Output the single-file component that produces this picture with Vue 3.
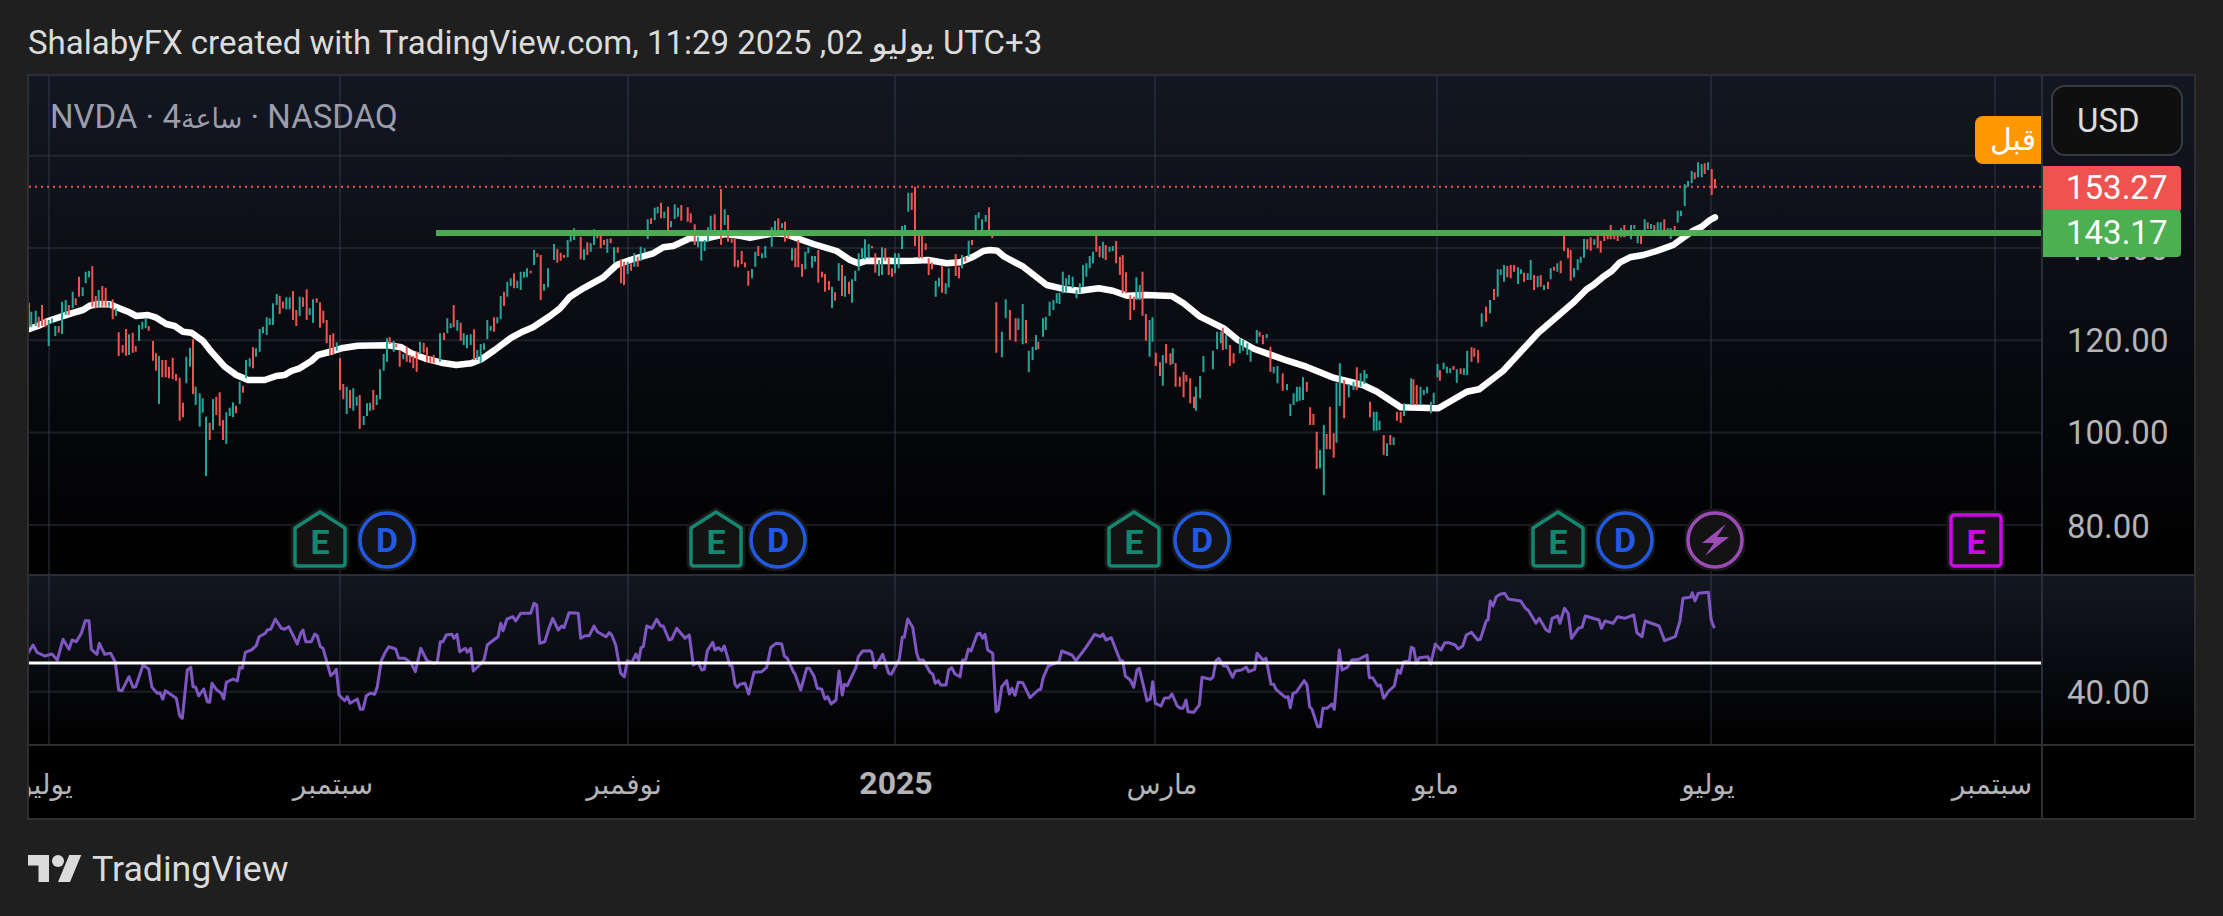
<script setup>
// bars are traced from the picture: "x,top,bottom" in crop coordinates, converted to page coordinates
const bars = (text, ox, oy, sx = 3) =>
  text.trim().split(/\s+/).map((item) => {
    const [x, top, bottom] = item.split(",").map(Number);
    return `M${(ox + x / sx).toFixed(1)} ${(oy + top / 3).toFixed(1)}V${(oy + bottom / 3).toFixed(1)}`;
  }).join("");

const line = (text, ox, oy, sx = 3) =>
  text.trim().split(/\s+/).map((item) => {
    const [x, y] = item.split(",").map(Number);
    return `${(ox + x / sx).toFixed(1)},${(oy + y / 3).toFixed(1)}`;
  }).join(" ");

const tealPath =
  bars(`10,215,262 23,212,258 62,240,318 72,235,250 82,258,288 102,185,282 113,180,225 134,155,205 164,142,168 173,95,130 183,93,112 212,150,200 243,185,200 264,205,228
    303,283,345 333,255,303 343,245,268 353,235,265 393,348,492 475,350,430 486,323,380 503,440,495 515,460,560 524,475,518 534,530,708 555,477,570 595,517,612 605,503,528 615,487,532 635,425,492 654,360,415 665,355,380 684,325,350 695,267,335 705,260,280 716,232,285 725,235,255 735,190,255 746,162,195 775,172,208 785,172,208 815,170,228 845,205,225 855,178,248
    926,307,332 956,440,522 976,445,512 986,470,497 1007,528,555 1017,490,528 1026,488,512 1046,465,495 1056,388,478 1067,342,392 1077,295,365 1097,303,335 1126,342,358 1176,305,342 1236,280,365 1258,235,280 1268,250,265 1288,240,272 1307,280,315 1317,285,325 1328,283,315 1348,330,360 1358,312,368 1368,310,330 1378,240,298 1388,258,272 1408,232,250 1418,168,238 1438,125,170 1448,115,138 1468,122,145 1478,95,150 1488,95,113 1497,85,112 1518,30,75 1548,132,152 1560,85,142`, 28, 240) +
  bars(`222,222,270 263,210,262 272,182,215 282,175,210 292,180,190 312,238,270 332,220,245 342,178,225 382,207,248 402,232,278 443,275,312 463,250,290 482,230,272 494,235,247 503,148,207 524,113,150 533,110,130 553,125,145 573,153,172 584,103,147 594,113,140 654,200,232 664,215,272 674,210,243 684,172,215 692,137,180 734,118,165 816,297,325 826,245,290 846,250,265 856,228,263 875,172,230 885,153,185 906,160,175 936,235,272 976,245,298 985,232,250 996,258,293 1005,258,275 1056,350,415 1076,280,332 1095,318,380 1116,328,398 1126,302,333 1136,250,302 1146,235,265 1155,208,268 1166,222,265 1197,270,318 1206,232,315 1245,250,310 1256,250,295 1266,168,237 1275,165,185 1285,68,125 1367,332,380 1377,323,350 1397,340,372 1406,295,352 1446,255,295 1466,212,260 1487,135,185 1496,127,145 1506,148,185 1517,135,155`, 480, 170) +
  bars(`555,515,592 563,418,475 590,475,510 599,432,553 612,572,637 620,560,600 627,525,570 642,475,530 648,470,510 656,425,468 664,420,450 671,400,430 677,398,432 684,335,400 691,355,395 697,345,375 705,350,385 713,390,415 720,370,400 727,315,380 734,310,350 741,288,325 748,275,310 769,245,295 783,260,275 790,258,273 840,352,420 847,375,420 868,480,590 874,472,545 896,585,677 917,565,612 975,648,715 966,680,752 982,588,637 1002,572,628 1011,515,568 1019,515,550 1030,525,568 1059,535,580 1066,540,572 1075,550,585 1082,572,605 1095,510,550 1116,522,535 1131,620,640 1139,618,670 1159,672,690 1166,732,768 1173,700,735 1180,680,725 1186,680,722 1193,652,720 1237,795,1005 1229,870,925 1264,668,848 1271,610,738 1290,672,712 1300,665,690 1315,640,680 1323,630,672 1328,642,655 1343,755,812 1349,755,812 1355,782,810 1371,850,888 1385,832,855 1407,730,768 1422,655,735 1442,680,735 1449,690,705 1456,680,700 1464,725,760 1470,698,732 1478,612,652 1491,608,628 1498,620,640 1505,625,640 1519,628,668 1534,625,645 1541,572,645`, 740, 160, 2.119) +
  bars(`5,520,560 30,480,520 53,388,470 62,388,405 72,375,425 114,382,432 123,388,402 143,400,420 152,360,420 173,408,442 192,435,450 212,385,418 232,370,395 282,385,412 293,358,390 302,350,368 312,297,353 343,298,315 423,265,292 453,255,298 463,255,267 473,277,310 494,238,275 513,252,267 533,247,282 542,247,270 563,265,285 572,265,297 593,212,248 603,212,228 614,133,198 624,123,140 635,93,130 654,67,112 665,72,112 684,67,90`, 1480, 140);

const redPath =
  bars(`3,188,262 32,230,262 42,195,258 52,238,260 92,258,278 122,195,225 143,175,195 153,110,170 193,78,200 203,168,205 223,138,200 233,143,200 254,178,238
    272,277,348 284,315,338 294,267,347 314,278,338 323,318,335 362,258,272 375,303,362 384,340,392 403,360,412 413,360,412 423,380,415 434,353,418 444,402,422 455,413,542 465,488,532 495,298,462
    545,548,600 565,470,525 575,457,558 585,540,600 624,497,520 645,437,458 675,322,385 755,167,222 765,185,205 795,153,240 805,210,258 825,172,200 836,148,240 866,175,188 876,187,263 886,212,250 896,240,310 906,285,345 916,280,342
    936,354,450 946,432,478 966,450,505 995,465,567 1036,450,510 1085,292,312 1105,312,322 1115,330,380 1136,320,365 1146,345,368 1156,348,385 1166,335,395 1187,308,338 1197,322,365 1207,348,368 1217,345,370 1248,278,300 1277,195,262 1298,248,302 1338,268,360 1398,232,275 1428,155,198 1458,100,145 1508,92,100 1528,40,52 1538,45,180`, 28, 240) +
  bars(`232,237,278 242,248,272 252,255,263 302,200,268 322,217,255 352,190,205 362,195,235 372,210,225 392,205,220 413,232,248 423,268,340 432,275,345 453,280,302 473,260,290 513,145,162 543,98,145 564,110,185 604,105,152 623,112,155 632,130,158 644,163,225 704,133,198 723,57,225 744,135,215 755,205,218 764,207,290 774,270,292 785,243,282 795,277,292 805,303,347 835,228,258 895,145,185 915,155,215 925,195,207 946,235,292 955,210,292 966,282,320 1015,240,338 1026,305,322 1035,312,365 1047,333,360 1065,367,392 1086,285,378 1107,335,372 1176,228,235 1186,250,308 1216,235,272 1226,262,315 1236,295,320 1295,68,120 1305,50,228 1317,195,265 1326,182,265 1337,220,240 1346,265,315 1356,278,298 1386,287,368 1427,252,318 1437,290,325 1456,260,275 1476,210,225 1527,112,195 1537,187,205`, 480, 170) +
  bars(`543,427,578 572,450,540 584,475,545 606,480,550 632,545,568 755,217,275 762,258,292 775,255,300 797,243,310 805,290,345 811,285,400 818,337,400 827,405,480 835,410,450 853,335,467 860,462,542 881,578,618 890,607,648 903,552,610 912,580,615 923,610,680 932,650,680 940,635,712 946,645,665 954,655,730 962,710,745 1023,503,570 1038,555,618 1046,580,610 1101,515,530 1108,525,553 1124,560,635 1150,640,692 1201,665,695 1208,742,795 1215,762,795 1222,815,927 1243,822,868 1250,740,868 1258,820,893 1280,660,775 1307,622,690 1335,725,772 1364,825,885 1378,825,855 1392,755,782 1400,755,788 1427,658,735 1434,675,735 1483,630,662 1512,618,630 1527,625,642 1550,562,605 1556,565,590 1564,570,608`, 740, 160, 2.119) +
  bars(`18,500,545 42,447,480 82,378,412 92,375,415 102,375,395 132,398,425 162,405,450 182,405,440 204,425,447 222,380,392 242,362,400 252,277,333 264,325,355 272,330,422 322,298,328 332,292,332 353,270,325 362,302,338 373,278,303 383,288,298 392,255,298 403,285,298 413,285,303 433,255,292 442,272,288 483,287,312 503,247,267 523,255,280 553,238,287 584,258,275 644,97,118 674,70,102 695,87,165 705,117,145`, 1480, 140);

// moving average
const maPoints = [
  line(`0,268 30,258 60,243 100,230 130,220 165,210 185,197 210,192 245,193 270,203 300,215 325,228 360,225 385,233 415,252 440,258 465,275 490,278 525,303 550,335 590,380 625,405 660,420 710,420 745,408 770,405 790,393 815,385 850,363 870,345 915,333 940,325 990,317 1080,316 1120,322 1150,340 1190,355 1240,368 1285,375 1330,370 1360,358 1400,330 1450,293 1480,277 1515,262 1540,245 1566,228`, 28, 240),
  line(`240,415 270,380 310,355 370,322 410,285 450,270 520,250 550,232 580,228 630,205 680,205 735,192 780,197 810,203 880,190 915,192 960,208 1000,222 1070,243 1110,270 1135,280 1160,272 1250,273 1300,272 1345,270 1400,280 1440,277 1480,260 1510,243 1530,240`, 480, 170),
  line(`545,272 560,290 600,320 650,375 690,388 720,392 760,385 790,392 820,407 860,405 915,408 940,430 975,470 1025,505 1055,540 1090,567 1160,602 1200,620 1255,652 1320,675 1350,695 1400,742 1480,745 1510,720 1540,695 1566,688`, 740, 160, 2.119),
  "1503,371 1538,333 1574,302",
  line(`320,448 340,435 370,410 395,393 420,367 450,352 490,345 530,333 580,315 610,293 640,272 665,260 690,240 705,232`, 1480, 140),
].join(" ");

// rsi
const rsiPoints = [
  line(`0,190 15,165 28,188 40,193 50,198 72,192 88,210 105,148 123,178 132,150 145,155 160,130 172,92 183,92 190,178 207,193 214,160 230,193 248,190 262,217 272,300 282,302 303,260 315,292 323,290 345,225 362,237 372,292 388,310 396,308 404,328 412,302 445,325 455,378 463,385 478,240 488,232 495,290 503,292 512,318 527,297 538,335 545,337 552,280 565,298 580,310 587,327 595,277 615,267 628,273 635,232 643,235 652,187 670,180 685,167 693,140 712,130 718,120 728,118 742,87 760,115 770,118 782,110 808,162 818,130 825,120 833,155 850,155 860,132 868,138 877,170 885,175 895,210 908,257 918,248 925,238 933,315 950,332 958,320 966,340 988,327 997,358 1005,358 1015,317 1027,310 1040,313 1048,290 1060,212 1070,190 1082,170 1103,177 1112,205 1130,205 1150,220 1162,245 1178,175 1197,212 1218,220 1228,215 1237,155 1245,155 1255,135 1272,133 1278,145 1287,133 1295,185 1312,175 1318,187 1328,175 1336,243 1358,222 1368,210 1378,165 1390,155 1410,140 1418,100 1425,122 1437,87 1455,80 1463,93 1478,70 1508,70 1518,40 1526,45 1535,160 1550,155 1563,115`, 28, 590),
  line(`8,85 25,120 35,108 42,113 57,68 85,70 92,145 105,137 118,137 132,108 142,125 168,140 178,128 185,135 197,165 212,250 223,260 232,212 245,218 258,192 266,212 273,173 280,170 290,108 306,115 320,88 332,108 340,108 357,150 365,147 380,115 405,145 418,135 430,225 445,217 455,240 463,238 472,182 488,157 495,180 505,173 515,182 523,168 540,227 546,227 555,283 562,292 570,283 585,280 596,312 612,247 635,245 650,232 662,173 678,160 695,162 703,198 712,205 730,245 735,252 752,300 770,235 778,235 792,258 802,295 815,298 825,327 833,320 843,342 858,330 867,243 877,315 883,283 892,287 918,232 925,200 938,183 960,182 965,187 975,233 998,193 1016,250 1024,253 1048,208 1057,142 1063,142 1073,87 1088,112 1100,190 1107,210 1120,210 1140,247 1148,252 1156,280 1165,272 1172,285 1188,285 1196,240 1205,233 1215,252 1230,260 1238,210 1247,210 1255,177 1263,183 1282,132 1290,130 1298,145 1305,133 1313,180 1328,190 1338,365 1345,360 1355,290 1370,272 1378,312 1386,295 1395,316 1405,277 1418,278 1440,323 1465,300 1472,298 1480,262 1495,228 1527,215 1535,183 1566,195`, 550, 590),
  line(`12,212 40,175 68,133 85,140 93,132 102,150 118,143 138,195 145,212 152,212 160,258 175,270 185,292 195,240 202,235 225,332 235,327 242,275 250,340 267,348 277,325 292,323 300,312 315,347 325,355 333,355 342,330 348,365 365,367 382,345 390,262 415,268 423,262 432,212 440,205 455,228 465,228 482,262 490,243 508,240 523,232 530,245 548,238 555,190 573,210 582,205 597,283 605,283 612,298 640,322 648,320 655,353 663,310 672,307 697,272 705,285 713,350 720,358 737,410 745,410 753,355 765,355 780,342 787,358 802,180 810,240 825,233 840,210 860,208 885,195 892,263 902,263 917,288 925,285 935,325 950,303 967,288 977,240 985,250 995,215 1012,213 1018,172 1025,175 1033,220 1042,203 1068,200 1076,222 1090,162 1107,180 1118,158 1130,158 1150,165 1158,177 1172,168 1183,135 1198,127 1217,150 1225,148 1243,92 1248,90 1255,33 1263,48 1273,20 1282,14`, 1072, 590),
  line(`0,313 10,310 18,327 45,333 55,355 62,362 78,400 85,385 100,420 107,425 113,385 125,378 130,400 140,355 148,370 155,445 170,415 178,412 185,378 215,390 220,415 228,393 245,400 255,380 270,385 290,375 297,428 308,440 315,393 345,408 357,452 380,440 390,395 397,325 413,322 417,308 423,333 430,310 452,307 458,390 465,415`, 1500, 490, 2.169),
].join(" ");

const gridX = [49, 340, 628, 895, 1155, 1437, 1711, 1995];
const gridY = [155.7, 248, 340.3, 432.6, 524.9];

const pins = [
  { x: 320, kind: "house", letter: "E", color: "#13876f" },
  { x: 387, kind: "circle", letter: "D", color: "#2259e3" },
  { x: 716, kind: "house", letter: "E", color: "#13876f" },
  { x: 778, kind: "circle", letter: "D", color: "#2259e3" },
  { x: 1134, kind: "house", letter: "E", color: "#13876f" },
  { x: 1202, kind: "circle", letter: "D", color: "#2259e3" },
  { x: 1558, kind: "house", letter: "E", color: "#13876f" },
  { x: 1625, kind: "circle", letter: "D", color: "#2259e3" },
  { x: 1715, kind: "bolt", letter: "", color: "#9c4bb6" },
  { x: 1976, kind: "rect", letter: "E", color: "#cf07e8" },
];

const priceLabels = [
  { text: "140.00", y: 249 },
  { text: "120.00", y: 341 },
  { text: "100.00", y: 433 },
  { text: "80.00", y: 527 },
];

const months = [
  { text: "يوليو", x: 46 },
  { text: "سبتمبر", x: 333 },
  { text: "نوفمبر", x: 624 },
  { text: "2025", x: 896, bold: true },
  { text: "مارس", x: 1162 },
  { text: "مايو", x: 1436 },
  { text: "يوليو", x: 1708 },
  { text: "سبتمبر", x: 1992 },
];
</script>

<template>
  <div class="page">
    <div class="title">ShalabyFX created with TradingView.com, يوليو 02, 2025 11:29 UTC+3</div>

    <div class="frame">
      <div class="pane main-pane">
        <svg class="plot" width="2012" height="498" viewBox="29 76 2012 498">
          <line v-for="x in gridX" :key="x" class="grid" :x1="x" :x2="x" y1="76" y2="574" />
          <line v-for="y in gridY" :key="y" class="grid" x1="29" x2="2041" :y1="y" :y2="y" />
          <line class="last-price" x1="29" x2="2041" y1="186.7" y2="186.7" />
          <polyline class="ma" :points="maPoints" />
          <path class="bar-teal" :d="tealPath" />
          <path class="bar-red" :d="redPath" />
          <line class="level" x1="436" x2="2041" y1="233" y2="233" />
        </svg>

        <div class="legend">NVDA · 4<span class="legend-ar">ساعة</span> · NASDAQ</div>
        <div class="session-tag">قبل</div>

        <svg
          v-for="pin in pins"
          :key="pin.x"
          class="pin"
          width="60"
          height="66"
          viewBox="0 0 60 66"
          :style="{ left: pin.x - 29 - 30 + 'px' }"
        >
          <template v-if="pin.kind == 'house'">
            <path class="pin-halo" d="M30 5L55 21V56Q55 59 52 59H8Q5 59 5 56V21Z" />
            <path class="pin-body" :stroke="pin.color" d="M30 5L55 21V56Q55 59 52 59H8Q5 59 5 56V21Z" />
          </template>
          <template v-else-if="pin.kind == 'rect'">
            <rect class="pin-halo" x="5" y="8" width="50" height="51" rx="3" />
            <rect class="pin-body" :stroke="pin.color" x="5" y="8" width="50" height="51" rx="3" />
          </template>
          <template v-else>
            <circle class="pin-halo" cx="30" cy="33" r="27" />
            <circle class="pin-body" :stroke="pin.color" cx="30" cy="33" r="27" />
          </template>
          <path v-if="pin.kind == 'bolt'" :fill="pin.color" d="M41 17L17 36H29L20 49L44 30H32Z" />
          <text v-else class="pin-letter" :fill="pin.color" x="30" :y="pin.kind == 'circle' ? 45 : 47">{{ pin.letter }}</text>
        </svg>
      </div>

      <div class="pane price-axis">
        <div
          v-for="label in priceLabels"
          :key="label.text"
          class="price-label"
          :style="{ top: label.y - 76 + 'px' }"
        >
          {{ label.text }}
        </div>
        <div class="currency">USD</div>
        <div class="tag tag-red">153.27</div>
        <div class="tag tag-green">143.17</div>
      </div>

      <div class="pane rsi-pane">
        <svg class="plot" width="2012" height="168" viewBox="29 576 2012 168">
          <line v-for="x in gridX" :key="x" class="grid" :x1="x" :x2="x" y1="576" y2="744" />
          <line class="grid" x1="29" x2="2041" y1="691.7" y2="691.7" />
          <polyline class="rsi" :points="rsiPoints" />
          <line class="rsi-mid" x1="29" x2="2041" y1="663" y2="663" />
        </svg>
      </div>

      <div class="pane price-axis rsi-axis">
        <div class="price-label" :style="{ top: 693 - 576 + 'px' }">40.00</div>
      </div>

      <div class="time-axis">
        <span
          v-for="month in months"
          :key="month.x"
          class="month"
          :class="{ 'month-bold': month.bold }"
          :style="{ left: month.x - 29 + 'px' }"
        >{{ month.text }}</span>
      </div>
      <div class="corner"></div>
    </div>

    <div class="footer">
      <svg width="54" height="27" viewBox="0 4 36 18">
        <path fill="#dbdbdb" d="M14 22H7V11H0V4h14v18zM28 22h-8l7.5-18h8L28 22z" />
        <circle fill="#dbdbdb" cx="20" cy="8" r="4" />
      </svg>
      <span class="brand">TradingView</span>
    </div>
  </div>
</template>

<style>
html,
body {
  margin: 0;
  background: #1f1f1f;
}
</style>

<style scoped>
.page {
  width: 2223px;
  height: 916px;
  box-sizing: border-box;
  padding-left: 28px;
  background: #1f1f1f;
  color: #dbdbdb;
  font-family: Roboto, "DejaVu Sans", sans-serif;
  overflow: hidden;
}
.title {
  height: 74px;
  display: flex;
  align-items: center;
  font-size: 33px;
  padding-top: 10px;
  box-sizing: border-box;
  white-space: nowrap;
}
.frame {
  margin-left: -1px;
  width: 2169px;
  box-sizing: border-box;
  border: 2px solid #2e2e2e;
  border-top-color: #2a2e39;
  display: grid;
  grid-template-columns: 2012px 153px;
  grid-template-rows: 498px 170px 74px;
  background: #000;
}
.pane {
  position: relative;
  background: linear-gradient(#131722, #000);
}
.main-pane,
.rsi-pane {
  overflow: hidden;
}
.rsi-pane,
.rsi-axis {
  border-top: 2px solid #2a2e39;
}
.price-axis {
  border-left: 2px solid #2a2e39;
}
.plot {
  display: block;
}
.grid {
  stroke: rgba(60, 64, 78, 0.42);
  stroke-width: 2;
}
.last-price {
  stroke: #ef5350;
  stroke-width: 2;
  stroke-dasharray: 2 4;
}
.ma {
  fill: none;
  stroke: #fff;
  stroke-width: 6.5;
  stroke-linecap: round;
  stroke-linejoin: round;
}
.bar-teal,
.bar-red {
  fill: none;
  stroke-width: 2;
}
.bar-teal {
  stroke: #26a69a;
}
.bar-red {
  stroke: #ef5350;
}
.level {
  stroke: #4caf50;
  stroke-width: 6;
  opacity: 0.97;
}
.rsi {
  fill: none;
  stroke: #7e57c2;
  stroke-width: 3;
  stroke-linejoin: round;
}
.rsi-mid {
  stroke: #fff;
  stroke-width: 3;
}
.legend {
  position: absolute;
  left: 21px;
  top: 22px;
  font-size: 33px;
  line-height: 38px;
  color: #9b9daa;
  white-space: nowrap;
}
.legend-ar {
  font-size: 27px;
}
.session-tag {
  position: absolute;
  right: 0;
  top: 40px;
  width: 66px;
  height: 48px;
  box-sizing: border-box;
  padding-right: 5px;
  text-align: right;
  line-height: 47px;
  font-size: 30px;
  color: #fff;
  background: #ff9800;
  border-radius: 8px 0 0 8px;
}
.pin {
  position: absolute;
  top: 431px;
}
.pin-halo {
  fill: none;
  stroke: #181818;
  stroke-width: 9;
  stroke-linejoin: round;
}
.pin-body {
  fill: #131313;
  stroke-width: 3.5;
  stroke-linejoin: round;
}
.pin-letter {
  font-family: Roboto, sans-serif;
  font-size: 34px;
  font-weight: 700;
  text-anchor: middle;
}
.price-label {
  position: absolute;
  left: 24px;
  font-size: 33px;
  line-height: 38px;
  transform: translateY(-50%);
  color: #b4b4b8;
}
.currency {
  position: absolute;
  left: 8px;
  top: 9px;
  width: 132px;
  height: 71px;
  box-sizing: border-box;
  padding-left: 24px;
  line-height: 67px;
  font-size: 33px;
  color: #dbdbdb;
  background: #0f0f0f;
  border: 2px solid #363a45;
  border-radius: 14px;
}
.tag {
  position: absolute;
  left: 0;
  width: 138px;
  box-sizing: border-box;
  padding-left: 23px;
  font-size: 33px;
  color: #fff;
  border-radius: 0 4px 4px 0;
}
.tag-red {
  top: 90px;
  height: 46px;
  line-height: 44px;
  background: #ef5350;
}
.tag-green {
  top: 134px;
  height: 47px;
  line-height: 46px;
  background: #4caf50;
}
.time-axis {
  position: relative;
  overflow: hidden;
  border-top: 2px solid #2e2e2e;
}
.corner {
  border-top: 2px solid #2e2e2e;
  border-left: 2px solid #2e2e2e;
}
.month {
  position: absolute;
  top: 19px;
  font-size: 28px;
  line-height: 40px;
  color: #b4b4b8;
  white-space: nowrap;
  transform: translateX(-50%);
}
.month-bold {
  top: 17px;
  font-size: 32px;
  font-weight: 700;
}
.footer {
  display: flex;
  align-items: center;
  gap: 10px;
  height: 96px;
  box-sizing: border-box;
  padding-top: 1px;
}
.brand {
  font-size: 35.7px;
}
</style>
